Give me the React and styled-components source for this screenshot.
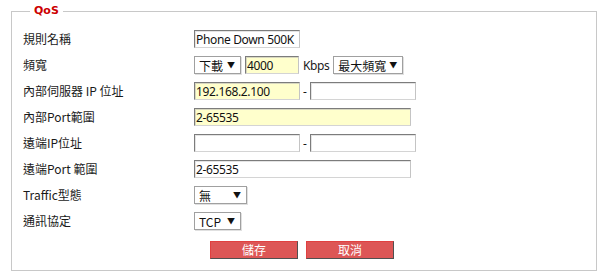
import React from "react";
import styled, { createGlobalStyle } from "styled-components";

const Global = createGlobalStyle`
  html, body { margin: 0; padding: 0; background: #fff; }
  body {
    font-family: "Noto Sans CJK TC", "Noto Sans", sans-serif;
    font-size: 12px;
    color: #1a1a1a;
  }
`;

const Fieldset = styled.fieldset`
  box-sizing: border-box;
  width: 586px;
  margin: 4px 0 0 11px;
  padding: 8px 0 11px 11px;
  border: 1px solid #c8c8c8;
  min-width: 0;
`;

const Legend = styled.legend`
  margin-left: 7px;
  padding: 0 4px;
  font-family: "DejaVu Sans", Verdana, sans-serif;
  font-weight: bold;
  font-size: 11px;
  line-height: 14px;
  color: #cc0000;
`;

const Form = styled.div`
  display: grid;
  grid-template-columns: 171px 1fr;
  grid-auto-rows: 26px;
  align-items: center;
`;

const Label = styled.div`
  font-size: 12px;
  line-height: 14px;
  white-space: nowrap;
`;

const Controls = styled.div`
  display: flex;
  align-items: center;
  gap: 4px;
`;

const TextInput = styled.input`
  box-sizing: border-box;
  width: ${(p) => p.$w}px;
  height: 18px;
  margin: 0;
  padding: 0 1px;
  font-family: "Noto Sans", sans-serif;
  font-size: 12px;
  letter-spacing: -0.35px;
  color: #111;
  background: ${(p) => (p.$yellow ? "#ffffcc" : "#fff")};
  border: 1px solid;
  border-color: #7c7c7c #c4c4c4 #d4d4d4 #7c7c7c;
  box-shadow: inset 1px 1px 0 ${(p) => (p.$yellow ? "#d8d8c0" : "#e4e4e4")};
  outline: none;
`;

const SelectBox = styled.div`
  box-sizing: border-box;
  width: ${(p) => p.$w}px;
  height: 18px;
  display: flex;
  align-items: center;
  justify-content: space-between;
  padding: 0 5px 0 4px;
  background: #fff;
  border: 1px solid #a0a0a0;
  box-shadow: 1px 1px 0 #e0e0e0;
  font-family: "Noto Sans CJK TC", "Noto Sans", sans-serif;
  font-size: 12px;
  color: #111;
`;

const Arrow = styled.span`
  font-size: 8px;
  line-height: 1;
  color: #111;
`;

const Unit = styled.span`
  font-family: "Noto Sans", sans-serif;
  font-size: 12px;
  letter-spacing: -0.4px;
`;

const Dash = styled.span`
  font-family: "Noto Sans", sans-serif;
  font-size: 12px;
  width: 4px;
  margin: 0 -1px;
  text-align: center;
`;

const ButtonRow = styled.div`
  display: flex;
  gap: 8px;
  margin-top: 7px;
  padding-left: 187px;
`;

const Button = styled.button`
  box-sizing: border-box;
  width: 88px;
  height: 18px;
  margin: 0;
  padding: 0;
  background: #dd5656;
  color: #fff;
  font-family: "Noto Sans CJK TC", sans-serif;
  font-size: 12px;
  line-height: 16px;
  border: 1px solid;
  border-color: #e04040 #505050 #505050 #e04040;
  cursor: pointer;
`;

const Select = ({ w, children }) => (
  <SelectBox $w={w}>
    <span>{children}</span>
    <Arrow>▼</Arrow>
  </SelectBox>
);

export default function App() {
  return (
    <>
      <Global />
      <Fieldset>
        <Legend>QoS</Legend>
        <Form>
          <Label>規則名稱</Label>
          <Controls>
            <TextInput $w={106} defaultValue="Phone Down 500K" />
          </Controls>

          <Label>頻寬</Label>
          <Controls>
            <Select w={47}>下載</Select>
            <TextInput $w={54} $yellow defaultValue="4000" />
            <Unit>Kbps</Unit>
            <Select w={70}>最大頻寬</Select>
          </Controls>

          <Label>內部伺服器 IP 位址</Label>
          <Controls>
            <TextInput $w={106} $yellow defaultValue="192.168.2.100" />
            <Dash>-</Dash>
            <TextInput $w={106} defaultValue="" />
          </Controls>

          <Label>內部Port範圍</Label>
          <Controls>
            <TextInput $w={217} $yellow defaultValue="2-65535" />
          </Controls>

          <Label>遠端IP位址</Label>
          <Controls>
            <TextInput $w={106} defaultValue="" />
            <Dash>-</Dash>
            <TextInput $w={106} defaultValue="" />
          </Controls>

          <Label>遠端Port 範圍</Label>
          <Controls>
            <TextInput $w={217} defaultValue="2-65535" />
          </Controls>

          <Label>Traffic型態</Label>
          <Controls>
            <Select w={53}>無</Select>
          </Controls>

          <Label>通訊協定</Label>
          <Controls>
            <Select w={47}>TCP</Select>
          </Controls>
        </Form>
        <ButtonRow>
          <Button>儲存</Button>
          <Button>取消</Button>
        </ButtonRow>
      </Fieldset>
    </>
  );
}
